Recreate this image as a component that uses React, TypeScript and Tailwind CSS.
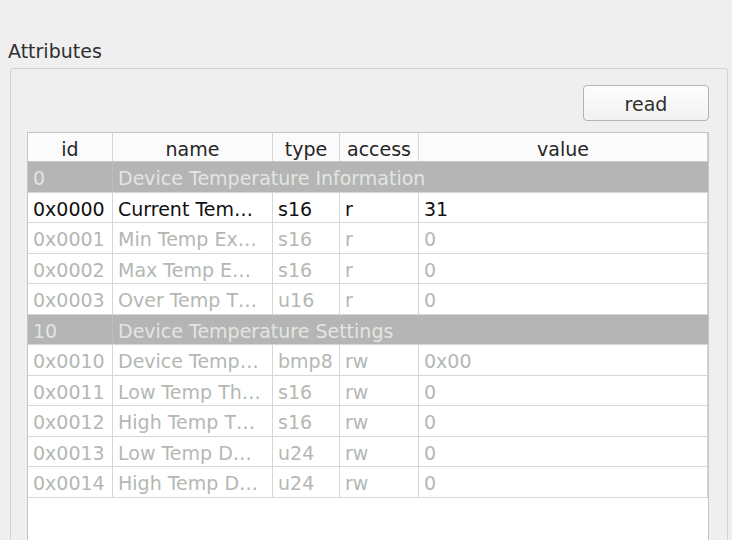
import React from "react";

type Row =
  | { kind: "group"; id: string; name: string }
  | { kind: "attr"; id: string; name: string; type: string; access: string; value: string; enabled?: boolean };

const rows: Row[] = [
  { kind: "group", id: "0", name: "Device Temperature Information" },
  { kind: "attr", id: "0x0000", name: "Current Tem…", type: "s16", access: "r", value: "31", enabled: true },
  { kind: "attr", id: "0x0001", name: "Min Temp Ex…", type: "s16", access: "r", value: "0" },
  { kind: "attr", id: "0x0002", name: "Max Temp E…", type: "s16", access: "r", value: "0" },
  { kind: "attr", id: "0x0003", name: "Over Temp T…", type: "u16", access: "r", value: "0" },
  { kind: "group", id: "10", name: "Device Temperature Settings" },
  { kind: "attr", id: "0x0010", name: "Device Temp…", type: "bmp8", access: "rw", value: "0x00" },
  { kind: "attr", id: "0x0011", name: "Low Temp Th…", type: "s16", access: "rw", value: "0" },
  { kind: "attr", id: "0x0012", name: "High Temp T…", type: "s16", access: "rw", value: "0" },
  { kind: "attr", id: "0x0013", name: "Low Temp D…", type: "u24", access: "rw", value: "0" },
  { kind: "attr", id: "0x0014", name: "High Temp D…", type: "u24", access: "rw", value: "0" },
];

const cols = "grid grid-cols-[85px_160px_67px_79px_1fr]";

export default function App() {
  return (
    <div
      className="h-[540px] w-[732px] overflow-hidden bg-[#efefef] pt-[40px] text-[19px] leading-[22px] text-[#2f2f2f]"
      style={{ fontFamily: '"DejaVu Sans", "Liberation Sans", sans-serif' }}
    >
      <div className="pl-[8px]">Attributes</div>

      <section className="ml-[10px] mt-[6px] h-[600px] w-[718px] rounded-[3px] border border-[#d3d3d3] pl-[16px] pr-[18px] pt-[16px]">
        <div className="flex justify-end">
          <button className="h-[36px] w-[126px] rounded-[4px] border border-[#b4b4b4] bg-gradient-to-b from-[#fdfdfd] to-[#f1f1f1] pt-[1px] text-[#2f2f2f]">
            read
          </button>
        </div>

        <div className="mt-[11px] flex h-[500px] flex-col border border-[#c4c4c4] bg-white">
          <div className={`${cols} h-[29px] shrink-0 border-b border-[#c8c8c8] bg-[#fbfbfb] text-[#262626]`}>
            {["id", "name", "type", "access", "value"].map((h) => (
              <div key={h} className="flex items-center justify-center border-r border-[#d6d6d6] pt-[3px]">
                {h}
              </div>
            ))}
          </div>

          {rows.map((r) =>
            r.kind === "group" ? (
              <div
                key={r.id}
                className={`${cols} h-[30.5px] shrink-0 border-b border-[#d6d6d6] bg-[#b5b5b5] text-[#e2e6e2]`}
              >
                <div className="flex items-center border-r border-[#bdbdbd] pl-[5px] pt-[3px]">{r.id}</div>
                <div className="col-span-4 flex items-center pl-[5px] pt-[3px]">{r.name}</div>
              </div>
            ) : (
              <div
                key={r.id}
                className={`${cols} h-[30.5px] shrink-0 border-b border-[#d6d6d6] ${
                  r.enabled ? "text-[#111111]" : "text-[#b3b8b3]"
                }`}
              >
                {[r.id, r.name, r.type, r.access, r.value].map((v, i) => (
                  <div
                    key={i}
                    className="flex items-center overflow-hidden whitespace-nowrap border-r border-[#d6d6d6] pl-[5px] pt-[3px]"
                  >
                    {v}
                  </div>
                ))}
              </div>
            )
          )}

          <div className="flex-1 bg-white" />
        </div>
      </section>
    </div>
  );
}
